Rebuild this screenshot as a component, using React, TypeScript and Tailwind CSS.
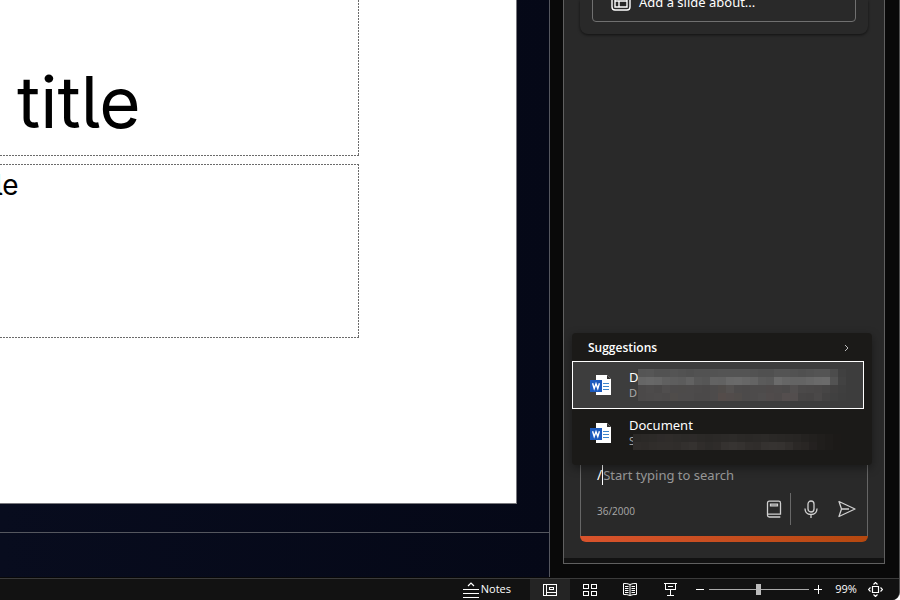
import React from 'react';

const titleOutline =
  'bg-[repeating-linear-gradient(90deg,#6b6b6b_0_2px,transparent_2px_3px),repeating-linear-gradient(#6b6b6b_0_2px,transparent_2px_3px)] bg-[length:100%_1px,1px_100%] bg-[position:bottom,right] bg-no-repeat';

const subtitleOutline =
  'bg-[repeating-linear-gradient(90deg,#6b6b6b_0_2px,transparent_2px_3px),repeating-linear-gradient(90deg,#6b6b6b_0_2px,transparent_2px_3px),repeating-linear-gradient(#6b6b6b_0_2px,transparent_2px_3px)] bg-[length:100%_1px,100%_1px,1px_100%] bg-[position:top,bottom,right] bg-no-repeat';

function WordIcon() {
  return (
    <svg width="22" height="22" viewBox="0 0 22 22" aria-hidden="true" className="shrink-0">
      <path d="M6 1h11l4 4v16H6z" fill="#fff" />
      <path d="M17 1v4h4z" fill="#33302e" />
      <path d="M13 9.5h6M13 12.5h6M13 15.5h6" stroke="#3f86cc" strokeWidth="1" />
      <rect x="0" y="6" width="12" height="12" fill="#1b5abe" />
      <path d="M2.6 9.2l1.6 5.4L6 9.8l1.8 4.8 1.6-5.4" fill="none" stroke="#fff" strokeWidth="1.4" />
    </svg>
  );
}

type Mosaic = string[][];

const firstMosaic: Mosaic = [
  ['#555', '#565656', '#525252', '#525252', '#545454', '#525252', '#505050', '#525252', '#525252', '#535353', '#545454', '#545454', '#545454', '#545454', '#525252', '#505050', '#505050', '#545454', '#545454', '#525252', '#505050', '#525252', '#545454', '#545454', '#4c4c4c', '#404040'],
  ['#666', '#686868', '#666', '#606060', '#5e5e5e', '#5c5c5c', '#626262', '#585858', '#565656', '#636363', '#626262', '#696969', '#6a6a6a', '#676767', '#646464', '#5b5b5b', '#595959', '#6b6b6b', '#666', '#646464', '#646464', '#676767', '#6a6a6a', '#6b6b6b', '#535353', '#424242'],
  ['#4b4949', '#4d4b4b', '#4b4949', '#504e4e', '#4d4b4b', '#4d4b4a', '#4d4b4b', '#4c4a4a', '#4b4949', '#4d4b4b', '#504c4a', '#545150', '#4d4b4b', '#4c4a4a', '#4d4b4b', '#4d4b4b', '#4e4a4a', '#4e4b4b', '#4c4a4a', '#524f4f', '#4b4949', '#4a4848', '#494747', '#464545', '#424141', '#3f3f3f'],
  ['#4b4949', '#4c4a4a', '#4d4b4b', '#4c4a4a', '#4f4c4a', '#4d4b4b', '#4d4b4b', '#4b4949', '#4b4949', '#4d4b4b', '#544c4a', '#524c4b', '#504c4a', '#4c4a4a', '#4d4b4b', '#4f4d4d', '#504b4b', '#4e4a4a', '#544e4e', '#534e4e', '#474545', '#464444', '#4a4848', '#434242', '#404040', '#3e3e3e'],
];

const secondMosaic: Mosaic = [
  ['#2a2826', '#2b2927', '#2c2a28', '#2e2b2a', '#2f2c2a', '#2d2b29', '#2c2a28', '#2d2a29', '#2b2927', '#2a2826', '#2b2927', '#2c2a28', '#2d2b29', '#2b2927', '#2a2826', '#2b2927', '#2c2a28', '#2a2826', '#292725', '#282624', '#272523', '#242220', '#22201e', '#201e1c', '#1e1c1a', '#1c1a18'],
  ['#2f2c2a', '#2e2b29', '#302d2b', '#312e2c', '#312e2c', '#302d2b', '#33302e', '#353230', '#302d2b', '#2d2b29', '#2f2c2a', '#353230', '#373432', '#353230', '#312e2c', '#302d2b', '#353230', '#363331', '#353230', '#312e2c', '#2b2826', '#292624', '#242120', '#201e1c', '#1e1c1a', '#1c1a18'],
];

function Redacted({ rows }: { rows: Mosaic }) {
  return (
    <span aria-hidden="true" className="flex flex-col">
      {rows.map((row, i) => (
        <span key={i} className="flex h-2">
          {row.map((color, j) => (
            <span key={j} className="w-2" style={{ backgroundColor: color }} />
          ))}
        </span>
      ))}
    </span>
  );
}

function Slide() {
  return (
    <main className="flex min-h-0 flex-1 flex-col bg-linear-to-r from-[#080c1e] to-[#050817]">
      <section aria-label="Slide" className="flex-1 pr-8 pb-7">
        <div className="flex h-full flex-col border-r border-b border-[#77777c] bg-white pr-[157px] font-['Inter',sans-serif] text-black [font-feature-settings:'cv05']">
          <h1 className={`${titleOutline} h-[156px] pt-[60px] pl-[17px] text-[71px] leading-[84px]`}>title</h1>
          <div className={`${subtitleOutline} mt-2 h-[174px] pt-[3px] text-[28px] leading-[36px]`}>
            <p className="-ml-[5px]">le</p>
          </div>
        </div>
      </section>
      <section aria-label="Slide notes" className="h-[45px] border-t border-[#55575f]" />
    </main>
  );
}

function Suggestions() {
  return (
    <div className="absolute right-3 bottom-[98px] left-2 h-[132px] rounded-sm bg-[#1b1a18] pt-0.5 shadow-[0_3px_10px_#0006]">
      <div className="flex h-[26px] items-center justify-between pr-[23px] pl-4">
        <h2 className="text-xs font-semibold">Suggestions</h2>
        <svg width="5" height="8" viewBox="0 0 5 8" fill="none" stroke="#bbb" aria-hidden="true">
          <path d="M1 1l3 3-3 3" />
        </svg>
      </div>
      <button type="button" className="relative flex h-12 w-[292px] items-center border border-white bg-[#3d3d3d] pl-[17px] text-left">
        <WordIcon />
        <span className="ml-[17px] flex flex-col pb-0.5 font-['Noto_Sans',sans-serif]">
          <span className="text-[13px] leading-[18px]">D</span>
          <span className="text-[11px] leading-[14px] text-[#aaa]">D</span>
        </span>
        <span className="absolute top-[7px] left-[65px]"><Redacted rows={firstMosaic} /></span>
      </button>
      <button type="button" className="relative flex h-12 w-[292px] items-center pl-[18px] text-left">
        <WordIcon />
        <span className="ml-[17px] flex flex-col pb-0.5 font-['Noto_Sans',sans-serif]">
          <span className="text-[13px] leading-[18px]">Document</span>
          <span className="text-[11px] leading-[14px] text-[#aaa]">S</span>
        </span>
        <span className="absolute top-[25px] left-[61px]"><Redacted rows={secondMosaic} /></span>
      </button>
    </div>
  );
}

function CopilotPane() {
  return (
    <aside aria-label="Copilot" className="w-[349px] shrink-0 bg-[#090909] pr-3.5 pb-3.5 pl-[13px]">
      <div className="relative flex h-full flex-col justify-between border-x border-b border-[#606060] bg-[#292929]">
        <div className="mx-4 rounded-b-lg px-3 pb-3 shadow-[0_1px_3px_#0009]">
          <button type="button" className="-mt-5 flex h-[42px] w-full items-center gap-2 rounded border border-[#707070] pl-[18px] font-['Noto_Sans',sans-serif] text-[13px]">
            <svg width="20" height="20" viewBox="0 0 20 20" fill="none" stroke="#fff" strokeWidth="1.4" className="shrink-0" aria-hidden="true">
              <rect x="1" y="1" width="18" height="18" rx="3" />
              <path d="M4 5h12v11H4zM8 10v6M4 10h12" />
            </svg>
            <span className="pt-1">Add a slide about...</span>
          </button>
        </div>
        <div className="border-b-[5px] border-[#121212] pb-4">
          <div className="mx-4 overflow-hidden rounded-b-md bg-linear-to-r from-[#d9532c] to-[#b5480f] pb-1.5">
            <div className="flex h-[71px] flex-col border-x border-[#666] bg-[#292929]">
              <div className="flex h-5 items-center pl-4 font-['Noto_Sans',sans-serif] text-[13px]">
                <span className="text-sm leading-5">/</span>
                <span className="h-5 w-px bg-white" />
                <input
                  aria-label="Message"
                  className="h-5 min-w-0 flex-1 bg-transparent placeholder-[#999] outline-none"
                  placeholder="Start typing to search"
                />
              </div>
              <div className="flex flex-1 items-center pr-[11px] pl-4">
                <span className="flex-1 pt-0.5 text-[10px] text-[#aaa]">36/2000</span>
                <button type="button" aria-label="Prompt guide" className="mr-2 -mt-1 text-[#d0d0d0]">
                  <svg width="16" height="18" viewBox="0 0 16 18" fill="none" stroke="currentColor" strokeWidth="1.3">
                    <path d="M1.5 15V3q0-1.8 1.8-1.8h9.4q1.8 0 1.8 1.8v11.2h-13v1q0 1.8 1.8 1.8h11M4.5 4.2h7v1.6h-7z" />
                  </svg>
                </button>
                <span className="-mt-1 h-8 w-px bg-[#686868]" />
                <button type="button" aria-label="Dictate" className="-mt-1 ml-[13px] text-[#d0d0d0]">
                  <svg width="14" height="18" viewBox="0 0 14 18" fill="none" stroke="currentColor" strokeWidth="1.3">
                    <rect x="4" y="1" width="6" height="11" rx="3" />
                    <path d="M1 8.5c0 4 2.5 6 6 6s6-2 6-6M7 14.5V18" />
                  </svg>
                </button>
                <button type="button" aria-label="Send" className="-mt-1 ml-5 text-[#d0d0d0]">
                  <svg width="18" height="18" viewBox="0 0 18 18" fill="none" stroke="currentColor" strokeWidth="1.3" strokeLinejoin="round">
                    <path d="M1 1.5L17 9 1 16.5 3.5 9zM3.5 9H11" />
                  </svg>
                </button>
              </div>
            </div>
          </div>
        </div>
        <Suggestions />
      </div>
    </aside>
  );
}

function StatusBar() {
  return (
    <footer className="flex h-[22px] shrink-0 items-center justify-end border-t border-[#3b3b3b] bg-[#121212] pr-4 text-[11px]">
      <button type="button" className="mr-[19px] flex items-center gap-0.5">
        <svg width="16" height="16" viewBox="0 0 16 16" fill="none" stroke="#fff" strokeWidth="1.2" aria-hidden="true">
          <path d="M0 7.5h16M0 11.5h16M0 15.5h16M5 4l3-3 3 3" />
        </svg>
        Notes
      </button>
      <button type="button" aria-label="Normal view" className="grid h-full w-10 place-items-center bg-[#242424]">
        <svg width="14" height="12" viewBox="0 0 14 12" fill="none" stroke="#fff" shapeRendering="crispEdges">
          <path d="M.5.5h13v11H.5zM3.5.5v11M3.5 8.5h10M6.5 3.5h4v2h-4z" />
        </svg>
      </button>
      <button type="button" aria-label="Slide sorter" className="grid h-full w-10 place-items-center">
        <svg width="14" height="12" viewBox="0 0 14 12" fill="none" stroke="#fff" shapeRendering="crispEdges">
          <path d="M.5.5h5v4h-5zM8.5.5h5v4h-5zM.5 7.5h5v4h-5zM8.5 7.5h5v4h-5z" />
        </svg>
      </button>
      <button type="button" aria-label="Reading view" className="grid h-full w-10 place-items-center">
        <svg width="14" height="13" viewBox="0 0 14 13" fill="none" stroke="#fff">
          <path d="M7 1.5Q4 .2.5.5v11Q4 11.2 7 12.5 10 11.2 13.5 11.5V.5Q10 .2 7 1.5zM7 1.5v11M2 3.5h3.5M2 5.5h3.5M2 7.5h3.5M2 9.5h3.5M8.5 3.5H12M8.5 5.5H12M8.5 7.5H12M8.5 9.5H12" />
        </svg>
      </button>
      <button type="button" aria-label="Slide show" className="grid h-full w-10 place-items-center">
        <svg width="13" height="13" viewBox="0 0 13 13" fill="none" stroke="#fff" shapeRendering="crispEdges">
          <path d="M0 .5h13M1.5.5v6h10v-6M4 3.5h5M6.5 6.5v6M3 12.5h7" />
        </svg>
      </button>
      <button type="button" aria-label="Zoom out" className="ml-1.5 grid h-full w-2 place-items-center">
        <span className="h-px w-2 bg-white" />
      </button>
      <input
        type="range"
        aria-label="Zoom"
        min={0}
        max={200}
        defaultValue={99}
        className="mx-[5px] h-3 w-[100px] appearance-none bg-[linear-gradient(#aaa,#aaa)] bg-[length:100%_1px] bg-center bg-no-repeat [&::-webkit-slider-thumb]:h-[11px] [&::-webkit-slider-thumb]:w-[5px] [&::-webkit-slider-thumb]:appearance-none [&::-webkit-slider-thumb]:bg-[#bbb]"
      />
      <button type="button" aria-label="Zoom in" className="grid h-full w-2 place-items-center">
        <svg width="8" height="9" viewBox="0 0 8 9" stroke="#fff" shapeRendering="crispEdges"><path d="M0 4.5h8M4.5 0v9" /></svg>
      </button>
      <button type="button" className="ml-3 w-6">99%</button>
      <button type="button" aria-label="Fit to window" className="ml-2.5">
        <svg width="15" height="15" viewBox="0 0 15 15" fill="none" stroke="#fff" strokeWidth="1.2">
          <path d="M4.5 4.5h6v6h-6zM5.5 2.5l2-2 2 2M5.5 12.5l2 2 2-2M2.5 5.5l-2 2 2 2M12.5 5.5l2 2-2 2" />
        </svg>
      </button>
    </footer>
  );
}

export default function App() {
  return (
    <div className="h-screen bg-white">
      <div className="flex h-full flex-col overflow-hidden rounded-br-lg border-r border-[#505050] bg-[#090909] font-['Open_Sans',sans-serif] text-white">
        <div className="flex min-h-0 flex-1">
          <div className="mb-px flex min-w-0 flex-1 flex-col border-r border-[#55575f]"><Slide /></div>
          <CopilotPane />
        </div>
        <StatusBar />
      </div>
    </div>
  );
}
